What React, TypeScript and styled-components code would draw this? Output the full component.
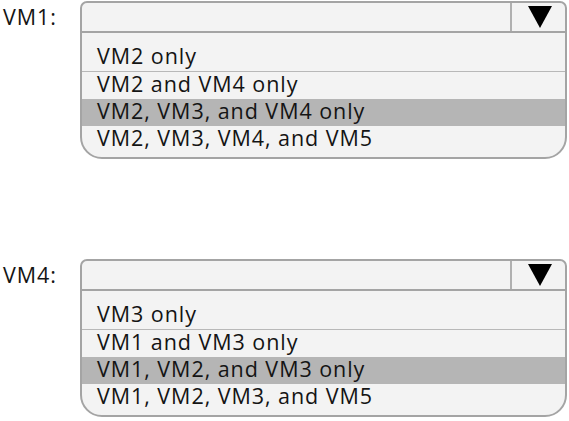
import { createGlobalStyle, styled } from 'styled-components'

const GlobalStyle = createGlobalStyle`
	html, body {
		margin: 0;
		padding: 0;
		background: #fff;
	}
	body {
		font-family: 'Open Sans', 'Noto Sans', sans-serif;
		color: #141414;
	}
`

type Question = {
	label: string
	options: string[]
	selected: number
}

const questions: Question[] = [
	{
		label: 'VM1:',
		options: ['VM2 only', 'VM2 and VM4 only', 'VM2, VM3, and VM4 only', 'VM2, VM3, VM4, and VM5'],
		selected: 2,
	},
	{
		label: 'VM4:',
		options: ['VM3 only', 'VM1 and VM3 only', 'VM1, VM2, and VM3 only', 'VM1, VM2, VM3, and VM5'],
		selected: 2,
	},
]

const Page = styled.div`
	width: 569px;
	height: 421px;
	padding-top: 1px;
	box-sizing: border-box;
	display: flex;
	flex-direction: column;
	gap: 100px;
`

const QuestionRow = styled.div`
	display: grid;
	grid-template-columns: 80px 487px;
	align-items: start;
`

const Label = styled.div`
	padding-left: 3px;
	margin-top: 4px;
	font-size: 21.5px;
	line-height: 24px;
	letter-spacing: 0.9px;
`

const Dropdown = styled.div`
	border: 2px solid #a4a4a4;
	border-radius: 7px 7px 22px 22px;
	background: #f3f3f3;
	overflow: hidden;
	display: flex;
	flex-direction: column;
`

const Header = styled.div`
	height: 28px;
	display: flex;
	border-bottom: 2px solid #a4a4a4;
`

const Field = styled.div`
	flex: 1;
`

const ArrowButton = styled.div`
	width: 51px;
	border-left: 2px solid #b0b0b0;
	display: flex;
	align-items: center;
	justify-content: center;
	padding-left: 2px;
`

const List = styled.div`
	display: flex;
	flex-direction: column;
	padding: 11px 0 4px;
`

const Option = styled.div<{ $first?: boolean; $active?: boolean }>`
	height: ${p => (p.$first ? '28px' : '27px')};
	box-sizing: border-box;
	padding-left: 15px;
	font-size: 21.5px;
	line-height: 24px;
	letter-spacing: 0.95px;
	white-space: nowrap;
	background: ${p => (p.$active ? '#b5b5b5' : 'transparent')};
	border-bottom: ${p => (p.$first ? '1px solid #b8b8b8' : 'none')};
`

function ArrowDown() {
	return (
		<svg width='24' height='22' viewBox='0 0 24 22'>
			<polygon points='0,0 24,0 12,22' fill='#000' />
		</svg>
	)
}

export default function App() {
	return (
		<>
			<GlobalStyle />
			<Page>
				{questions.map(q => (
					<QuestionRow key={q.label}>
						<Label>{q.label}</Label>
						<Dropdown>
							<Header>
								<Field />
								<ArrowButton>
									<ArrowDown />
								</ArrowButton>
							</Header>
							<List>
								{q.options.map((opt, i) => (
									<Option key={opt} $first={i === 0} $active={i === q.selected}>
										{opt}
									</Option>
								))}
							</List>
						</Dropdown>
					</QuestionRow>
				))}
			</Page>
		</>
	)
}
